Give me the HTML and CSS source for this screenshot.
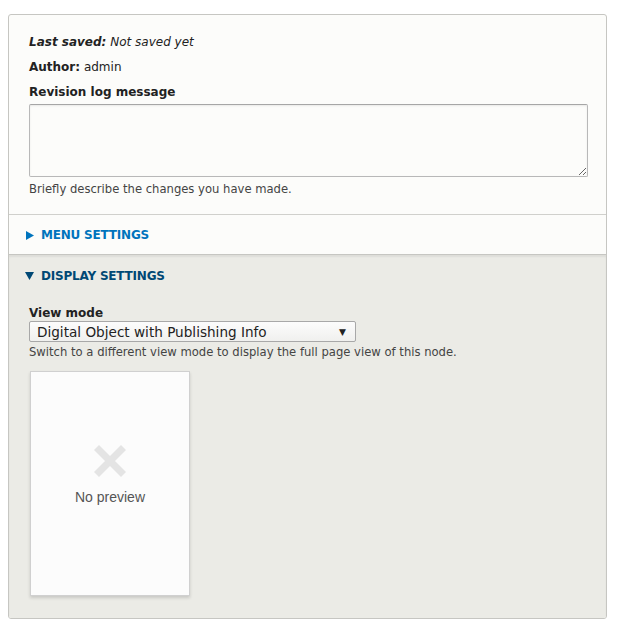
FILE: index.html
```html
<!DOCTYPE html>
<html>
<head>
<meta charset="utf-8">
<link rel="stylesheet" href="styles.css">
</head>
<body>
<div class="panel">
  <div class="meta">
    <div class="line"><em><strong>Last saved:</strong> Not saved yet</em></div>
    <div class="line"><strong>Author:</strong> admin</div>
    <label class="label">Revision log message</label>
    <div class="ta-wrap"><textarea class="ta"></textarea></div>
    <div class="desc">Briefly describe the changes you have made.</div>
  </div>
  <div class="section closed">
    <div class="summary"><svg class="tri" width="8" height="9" viewBox="0 0 8 9"><path d="M0 0 L8 4.5 L0 9 Z" fill="currentColor"/></svg>MENU SETTINGS</div>
  </div>
  <div class="section open">
    <div class="summary"><svg class="tri" width="9" height="8" viewBox="0 0 9 8"><path d="M0 0 L9 0 L4.5 8 Z" fill="currentColor"/></svg>DISPLAY SETTINGS</div>
    <div class="body">
      <div class="label">View mode</div>
      <div class="select"><span>Digital Object with Publishing Info</span><span class="arrow">&#9660;</span></div>
      <div class="desc">Switch to a different view mode to display the full page view of this node.</div>
      <div class="card">
        <svg class="x" width="34" height="34" viewBox="0 0 34 34"><path d="M3.5 3.5 L30.5 30.5 M30.5 3.5 L3.5 30.5" stroke="#e4e4e4" stroke-width="7" fill="none"/></svg>
        <div class="np">No preview</div>
      </div>
    </div>
  </div>
</div>
</body>
</html>
```
FILE: styles.css
```css
html, body { margin: 0; padding: 0; background: #fff; }
body { font-family: "DejaVu Sans", Verdana, sans-serif; font-size: 12px; color: #222; }
.panel {
  margin: 14px 22px 15px 8px;
  border: 1px solid #c6c6c2;
  border-radius: 3px;
  background: #fcfcfa;
  overflow: hidden;
}
.meta { padding: 18px 18px 17px 20px; border-bottom: 1px solid #d0d0cc; }
.line { height: 18px; line-height: 18px; margin-bottom: 7px; }
.label { display: block; font-weight: bold; height: 18px; line-height: 18px; margin-bottom: 3px; }
.ta-wrap { display: flex; }
.ta {
  box-sizing: border-box;
  width: 559px; height: 73px;
  border: 1px solid #b8b8b8; border-top-color: #a6a6a6;
  border-radius: 2px;
  background: #fcfcfa;
  margin: 0; padding: 0;
  box-shadow: inset 0 1px 2px rgba(0,0,0,0.08);
}
.desc { font-size: 11.6px; color: #444; margin-top: 4px; line-height: 16px; }
.summary {
  font-weight: bold; font-size: 12px; letter-spacing: -0.2px;
  height: 18px; line-height: 18px;
  padding-left: 16px;
  display: flex; align-items: center;
}
.tri { display: block; margin-right: 7px; flex: none; }
.closed .tri { margin-left: 1px; margin-right: 7px; }
.closed { padding: 11px 0 10px; border-bottom: 1px solid #c6c6c2; color: #0074bd; }
.open { background: #ebebe6; padding: 12px 0 22px; color: #004875; box-shadow: inset 0 2px 2px rgba(0,0,0,0.06); }
.body { padding: 20px 20px 0 20px; color: #222; }
.body .label { margin-bottom: 0; height: 16px; line-height: 16px; }
.select {
  box-sizing: border-box;
  width: 327px; height: 21px;
  border: 1px solid #a8a8a8;
  border-radius: 2px;
  background: linear-gradient(#fcfcfc, #f0f0ee);
  display: flex; align-items: center; justify-content: space-between;
  padding: 0 9px 0 7px;
  font-size: 13.6px; color: #222;
}
.arrow { font-size: 9px; }
.open .desc { margin-top: 2px; margin-bottom: 11px; }
.card {
  width: 160px; height: 225px; box-sizing: border-box;
  margin-left: 1px;
  background: #fcfcfc;
  border: 1px solid #d0d0d0;
  box-shadow: 0 2px 3px rgba(0,0,0,0.15);
  display: flex; flex-direction: column; align-items: center;
  padding-top: 72px;
}
.x { display: block; }
.np { font-family: "Liberation Sans", Arial, sans-serif; font-size: 14px; color: #555; margin-top: 11px; }
```
